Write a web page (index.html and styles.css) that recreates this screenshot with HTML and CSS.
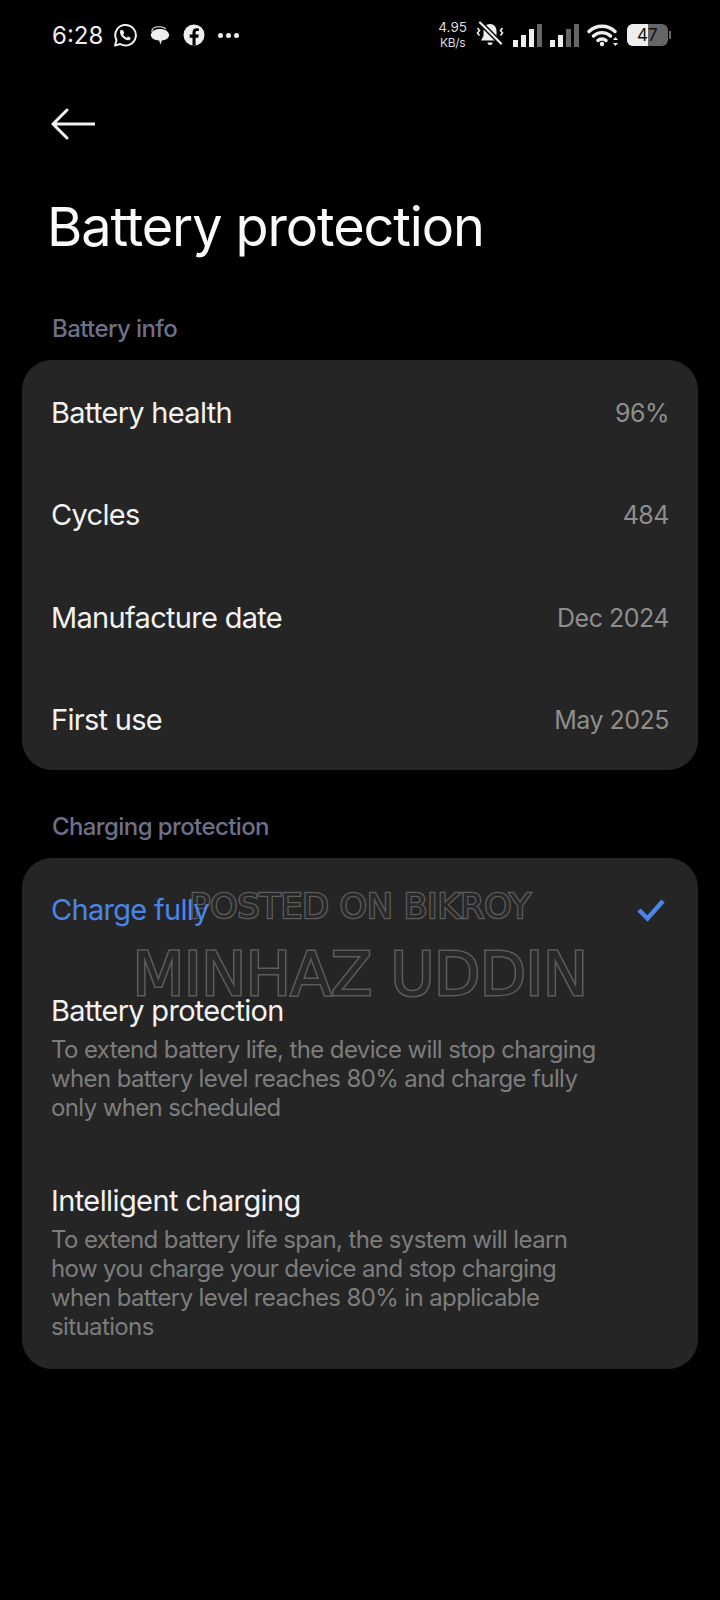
FILE: index.html
```html
<!DOCTYPE html>
<html lang="en">
<head>
  <meta charset="UTF-8">
  <title>Battery protection</title>
  <link rel="stylesheet" href="styles.css">
</head>
<body>
  <div class="screen">
    <!-- STATUS BAR -->
    <div class="status">
      <div class="status-left">
        <span class="time">6:28</span>
        <svg class="ic" width="24" height="24" viewBox="0 0 24 24"><path d="M2 22.5l1.5-5.4A10.3 10.3 0 1 1 7.2 21z" fill="none" stroke="#eee" stroke-width="2" stroke-linejoin="round"/><path d="M8.6 6.8c-.6 0-1.6.8-1.6 2.4 0 3.4 4.4 8 8.2 8 1.6 0 2.6-1.1 2.6-2 0-.5-2.2-1.7-2.7-1.7-.5 0-.9 1.1-1.4 1.1-1 0-3.500-2.400-3.500-3.300 0-.5 1-.9 1-1.400 0-.5-1.100-3.100-2.600-3.100z" fill="#eee"/></svg>
        <svg class="ic" width="20" height="22" viewBox="0 0 22 24"><path d="M2 8.500C2 5 5 3 10 3c3.500 0 6 .8 7.500 2.200" fill="none" stroke="#eee" stroke-width="1.200"/><path d="M1 12c0-3.500 4-6.500 10-6.500S21 8.500 21 12s-4 6-8 6l-1.500 4.500L10 18c-5 0-9-2.500-9-6z" fill="#eee"/></svg>
        <svg class="ic" width="22" height="22" viewBox="0 0 22 22"><circle cx="11" cy="11" r="10.500" fill="#eee"/><path d="M12.600 21.500v-7.800h2.700l.5-3.100h-3.200V8.700c0-.9.400-1.600 1.700-1.600h1.600V4.400c-.7-.1-1.500-.2-2.300-.2-2.500 0-4.100 1.500-4.100 4.200v2.200H6.700v3.100h2.800v7.800z" fill="#000"/></svg>
        <span class="dots"><i></i><i></i><i></i></span>
      </div>
      <div class="status-right">
        <span class="speed">4.95<br><small>KB/s</small></span>
        <svg class="ic" width="30" height="28" viewBox="0 0 30 28"><path d="M15 3c-4 0-6.500 3-6.500 7v5l-2.500 4.500h18L21.500 15v-5c0-4-2.500-7-6.500-7z" fill="#eee"/><path d="M12.500 21.500h5a2.500 2.500 0 0 1-5 0z" fill="#eee"/><path d="M5 1.500l21 21" stroke="#000" stroke-width="5"/><path d="M5 1.500l21 21" stroke="#eee" stroke-width="2.200" stroke-linecap="round"/><path d="M2.500 7l2 2.500-2 2.500 2 2.500M27.500 7l-2 2.500 2 2.500-2 2.500" fill="none" stroke="#eee" stroke-width="1.600"/></svg>
        <div class="bars">
          <i class="b1"></i><i class="b2"></i><i class="b3"></i><i class="b4 off"></i>
        </div>
        <div class="bars">
          <i class="b1"></i><i class="b2"></i><i class="b3 off"></i><i class="b4 off"></i>
        </div>
        <svg class="ic" width="32" height="24" viewBox="0 0 32 24"><path d="M2 8.500c7-7 19-7 26 0M6.500 13c4.500-4.500 12.500-4.500 17 0M11 17.500c2-2 6-2 8 0" fill="none" stroke="#eee" stroke-width="3.400" stroke-linecap="round"/><circle cx="15" cy="21" r="2.200" fill="#eee"/><path d="M28.500 14l2.500 3h-5zM28.500 23l2.500-3h-5z" fill="#eee"/></svg>
        <div class="battery">
          <div class="battery-body"><div class="battery-fill"></div><span>47</span></div>
          <div class="battery-cap"></div>
        </div>
      </div>
    </div>

    <!-- HEADER -->
    <div class="back">
      <svg width="44" height="32" viewBox="0 0 44 32"><path d="M44 16H2M16 2L2 16l14 14" fill="none" stroke="#f2f2f2" stroke-width="3" stroke-linecap="round" stroke-linejoin="round"/></svg>
    </div>
    <h1 class="title">Battery protection</h1>

    <!-- BATTERY INFO -->
    <div class="section-label first">Battery info</div>
    <div class="card">
      <div class="row"><span class="row-name">Battery health</span><span class="row-val">96%</span></div>
      <div class="row"><span class="row-name">Cycles</span><span class="row-val">484</span></div>
      <div class="row"><span class="row-name">Manufacture date</span><span class="row-val">Dec 2024</span></div>
      <div class="row"><span class="row-name">First use</span><span class="row-val">May 2025</span></div>
    </div>

    <!-- CHARGING PROTECTION -->
    <div class="section-label">Charging protection</div>
    <div class="card card-options">
      <div class="option option-active">
        <span class="row-name">Charge fully</span>
        <svg width="30" height="24" viewBox="0 0 30 24"><path d="M3 12l8.500 8.500L27 3" fill="none" stroke="#4a86e8" stroke-width="4.500"/></svg>
      </div>
      <div class="option">
        <div class="row-name">Battery protection</div>
        <div class="option-desc">To extend battery life, the device will stop charging when battery level reaches 80% and charge fully only when scheduled</div>
      </div>
      <div class="option">
        <div class="row-name">Intelligent charging</div>
        <div class="option-desc">To extend battery life span, the system will learn how you charge your device and stop charging when battery level reaches 80% in applicable situations</div>
      </div>
    </div>

    <!-- WATERMARK -->
    <div class="mark mark-small">POSTED ON BIKROY</div>
    <div class="mark mark-big">MINHAZ UDDIN</div>
  </div>
</body>
</html>
```

FILE: styles.css
```css
* {
  box-sizing: border-box;
}

body {
  margin: 0;
  background-color: #000;
  font-family: Inter, "Liberation Sans", sans-serif;
  color: #f2f2f2;
}

.screen {
  position: relative;
  width: 720px;
  height: 1600px;
  overflow: hidden;
  background-color: #000;
}

.status {
  display: flex;
  align-items: center;
  justify-content: space-between;
  height: 70px;
  padding: 0 49px 0 52px;
}

.status-left, .status-right {
  display: flex;
  align-items: center;
}

.status-left {
  gap: 13px;
}

.status-right {
  gap: 8px;
}

.ic {
  display: block;
}

.time {
  font-size: 24px;
  color: #eee;
  margin-right: -3px;
}

.dots {
  display: flex;
  gap: 3px;
}

.dots i {
  width: 5px;
  height: 5px;
  border-radius: 50%;
  background-color: #eee;
}

.speed {
  font-size: 13.500px;
  line-height: 15px;
  text-align: center;
  color: #ddd;
}

.speed small {
  font-size: 12px;
  letter-spacing: -.3px;
}

.bars {
  display: flex;
  align-items: flex-end;
  gap: 3px;
  height: 24px;
}

.bars i {
  width: 5px;
  background-color: #eee;
}

.bars .b1 { height: 7px; }
.bars .b2 { height: 12px; }
.bars .b3 { height: 18px; }
.bars .b4 { height: 23px; }

.bars .off {
  background-color: #666;
}

.battery {
  display: flex;
  align-items: center;
}

.battery-body {
  position: relative;
  width: 41px;
  height: 22px;
  border-radius: 6px;
  overflow: hidden;
  background-color: #666;
}

.battery-fill {
  width: 50%;
  height: 100%;
  background-color: #eee;
}

.battery-body span {
  position: absolute;
  left: 10px;
  top: 1px;
  font-size: 17px;
  line-height: 20px;
  color: #111;
}

.battery-cap {
  width: 2px;
  height: 8px;
  margin-left: 1px;
  background-color: #666;
}

.back {
  height: 80px;
  padding: 38px 0 0 51px;
}

.back svg {
  display: block;
}

.title {
  margin: 0;
  padding: 43px 0 0 47px;
  font-size: 54px;
  line-height: 68px;
  letter-spacing: -1.100px;
  font-weight: 400;
  color: #fafafa;
}

.section-label {
  padding-left: 52px;
  height: 29px;
  margin: 42px 0 0;
  font-size: 24px;
  font-weight: 500;
  line-height: 30px;
  letter-spacing: -.6px;
  color: #6f7088;
}

.section-label.first {
  margin-top: 53px;
}

.card {
  margin: 17px 22px 0;
  background-color: #252525;
  border-radius: 30px;
}

.row {
  display: flex;
  align-items: center;
  justify-content: space-between;
  height: 102.500px;
  padding: 3px 29px 0;
}

.row-name {
  position: relative;
  z-index: 1;
  font-size: 29px;
  line-height: 36px;
  letter-spacing: -.7px;
  color: #f2f2f2;
}

.row-val {
  font-size: 25px;
  letter-spacing: -.5px;
  color: #8e8e8e;
}

.card-options {
  height: 511px;
}

.option {
  padding: 61px 90px 0 29px;
}

.option + .option + .option .row-name {
  letter-spacing: -.6px;
}

.option-active {
  display: flex;
  align-items: center;
  justify-content: space-between;
  padding: 34px 32px 4px 29px;
}

.option-active .row-name {
  color: #4a86e8;
}

.option-desc {
  margin-top: 6px;
  font-size: 24px;
  line-height: 29px;
  letter-spacing: -.62px;
  color: #7d7d7d;
}

.mark {
  position: absolute;
  left: 0;
  width: 720px;
  text-align: center;
  font-family: "DejaVu Sans", sans-serif;
  color: #292929;
  paint-order: stroke fill;
  -webkit-text-stroke: 3px #5c5c5c;
  white-space: nowrap;
}

.mark-small {
  top: 883px;
  font-size: 34.500px;
  line-height: 46px;
  -webkit-text-stroke-width: 2.600px;
}

.mark-big {
  top: 936px;
  font-size: 60px;
  line-height: 76px;
  letter-spacing: -.4px;
}
```
